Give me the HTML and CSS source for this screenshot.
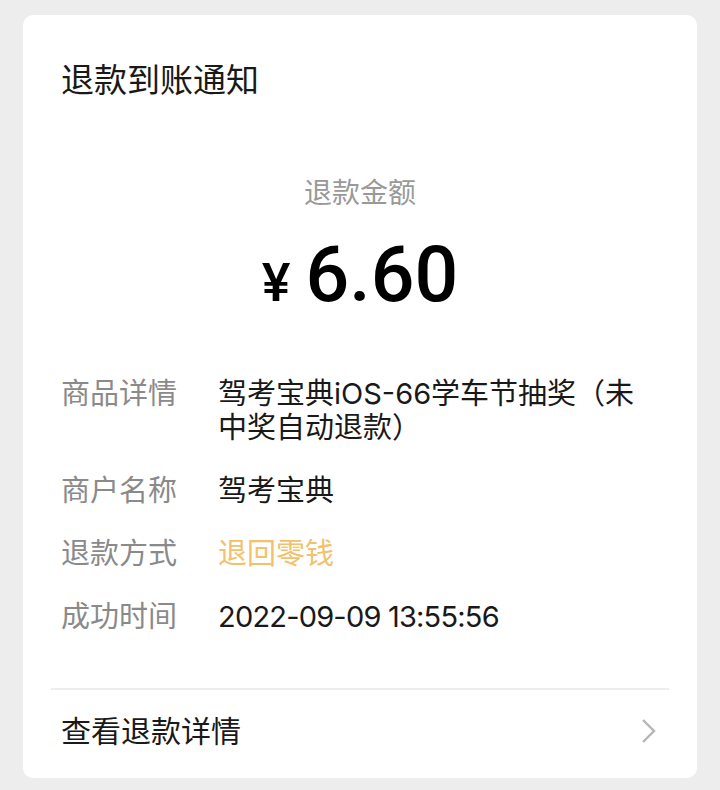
FILE: index.html
```html
<!DOCTYPE html>
<html>
  <head>
    <title>退款到账通知</title>
    <link rel="stylesheet" href="styles.css">
  </head>
  <body>
    <div class="card">
      <p class="title">退款到账通知</p>

      <div class="amount-box">
        <p class="amount-label">退款金额</p>
        <p class="amount"><span class="currency">¥</span>6.60</p>
      </div>

      <div class="details">
        <div class="row">
          <div class="label">商品详情</div>
          <div class="value">驾考宝典iOS-66学车节抽奖（未中奖自动退款）</div>
        </div>
        <div class="row">
          <div class="label">商户名称</div>
          <div class="value">驾考宝典</div>
        </div>
        <div class="row">
          <div class="label">退款方式</div>
          <div class="value value-orange">退回零钱</div>
        </div>
        <div class="row">
          <div class="label">成功时间</div>
          <div class="value value-time">2022-09-09 13:55:56</div>
        </div>
      </div>

      <div class="divider"></div>

      <div class="footer">
        <span class="footer-text">查看退款详情</span>
        <svg class="chevron" width="16" height="26" viewBox="0 0 16 26">
          <path d="M2 2 L13 13 L2 24" fill="none" stroke="#b5b5b5" stroke-width="2.4"/>
        </svg>
      </div>
    </div>
  </body>
</html>
```

FILE: styles.css
```css
body {
  margin: 0;
  background-color: #ededed;
  font-family: Inter, "Noto Sans CJK SC", sans-serif;
  color: #191919;
}

p {
  margin: 0;
}

.card {
  background-color: white;
  border-radius: 10px;
  margin: 15px 23px 0;
  height: 763px;
  box-sizing: border-box;
  padding-top: 43px;
}

.title {
  font-size: 33px;
  line-height: 44px;
  padding: 0 38px;
}

.amount-box {
  text-align: center;
  margin-top: 71px;
}

.amount-label {
  font-size: 28px;
  line-height: 40px;
  color: #999999;
}

.amount {
  font-family: Roboto, sans-serif;
  font-weight: 500;
  font-size: 77px;
  line-height: 90px;
  color: #000;
  margin-top: 17px;
}

.currency {
  font-size: 54px;
  margin-right: 15px;
}

.details {
  padding: 0 40px 0 38px;
  margin-top: 49px;
}

.row {
  display: flex;
  font-size: 29px;
  line-height: 34px;
  margin-bottom: 29px;
}

.label {
  width: 157px;
  flex-shrink: 0;
  color: #8a8a8a;
}

.value {
  flex: 1;
}

.value-orange {
  color: #f3c06c;
}

.value-time {
  letter-spacing: -0.8px;
}

.divider {
  margin: 54px 28px 0;
  border-top: 2px solid #ededed;
}

.footer {
  display: flex;
  justify-content: space-between;
  align-items: center;
  padding: 21px 40px 0 38px;
  font-size: 30px;
  line-height: 40px;
}
```
